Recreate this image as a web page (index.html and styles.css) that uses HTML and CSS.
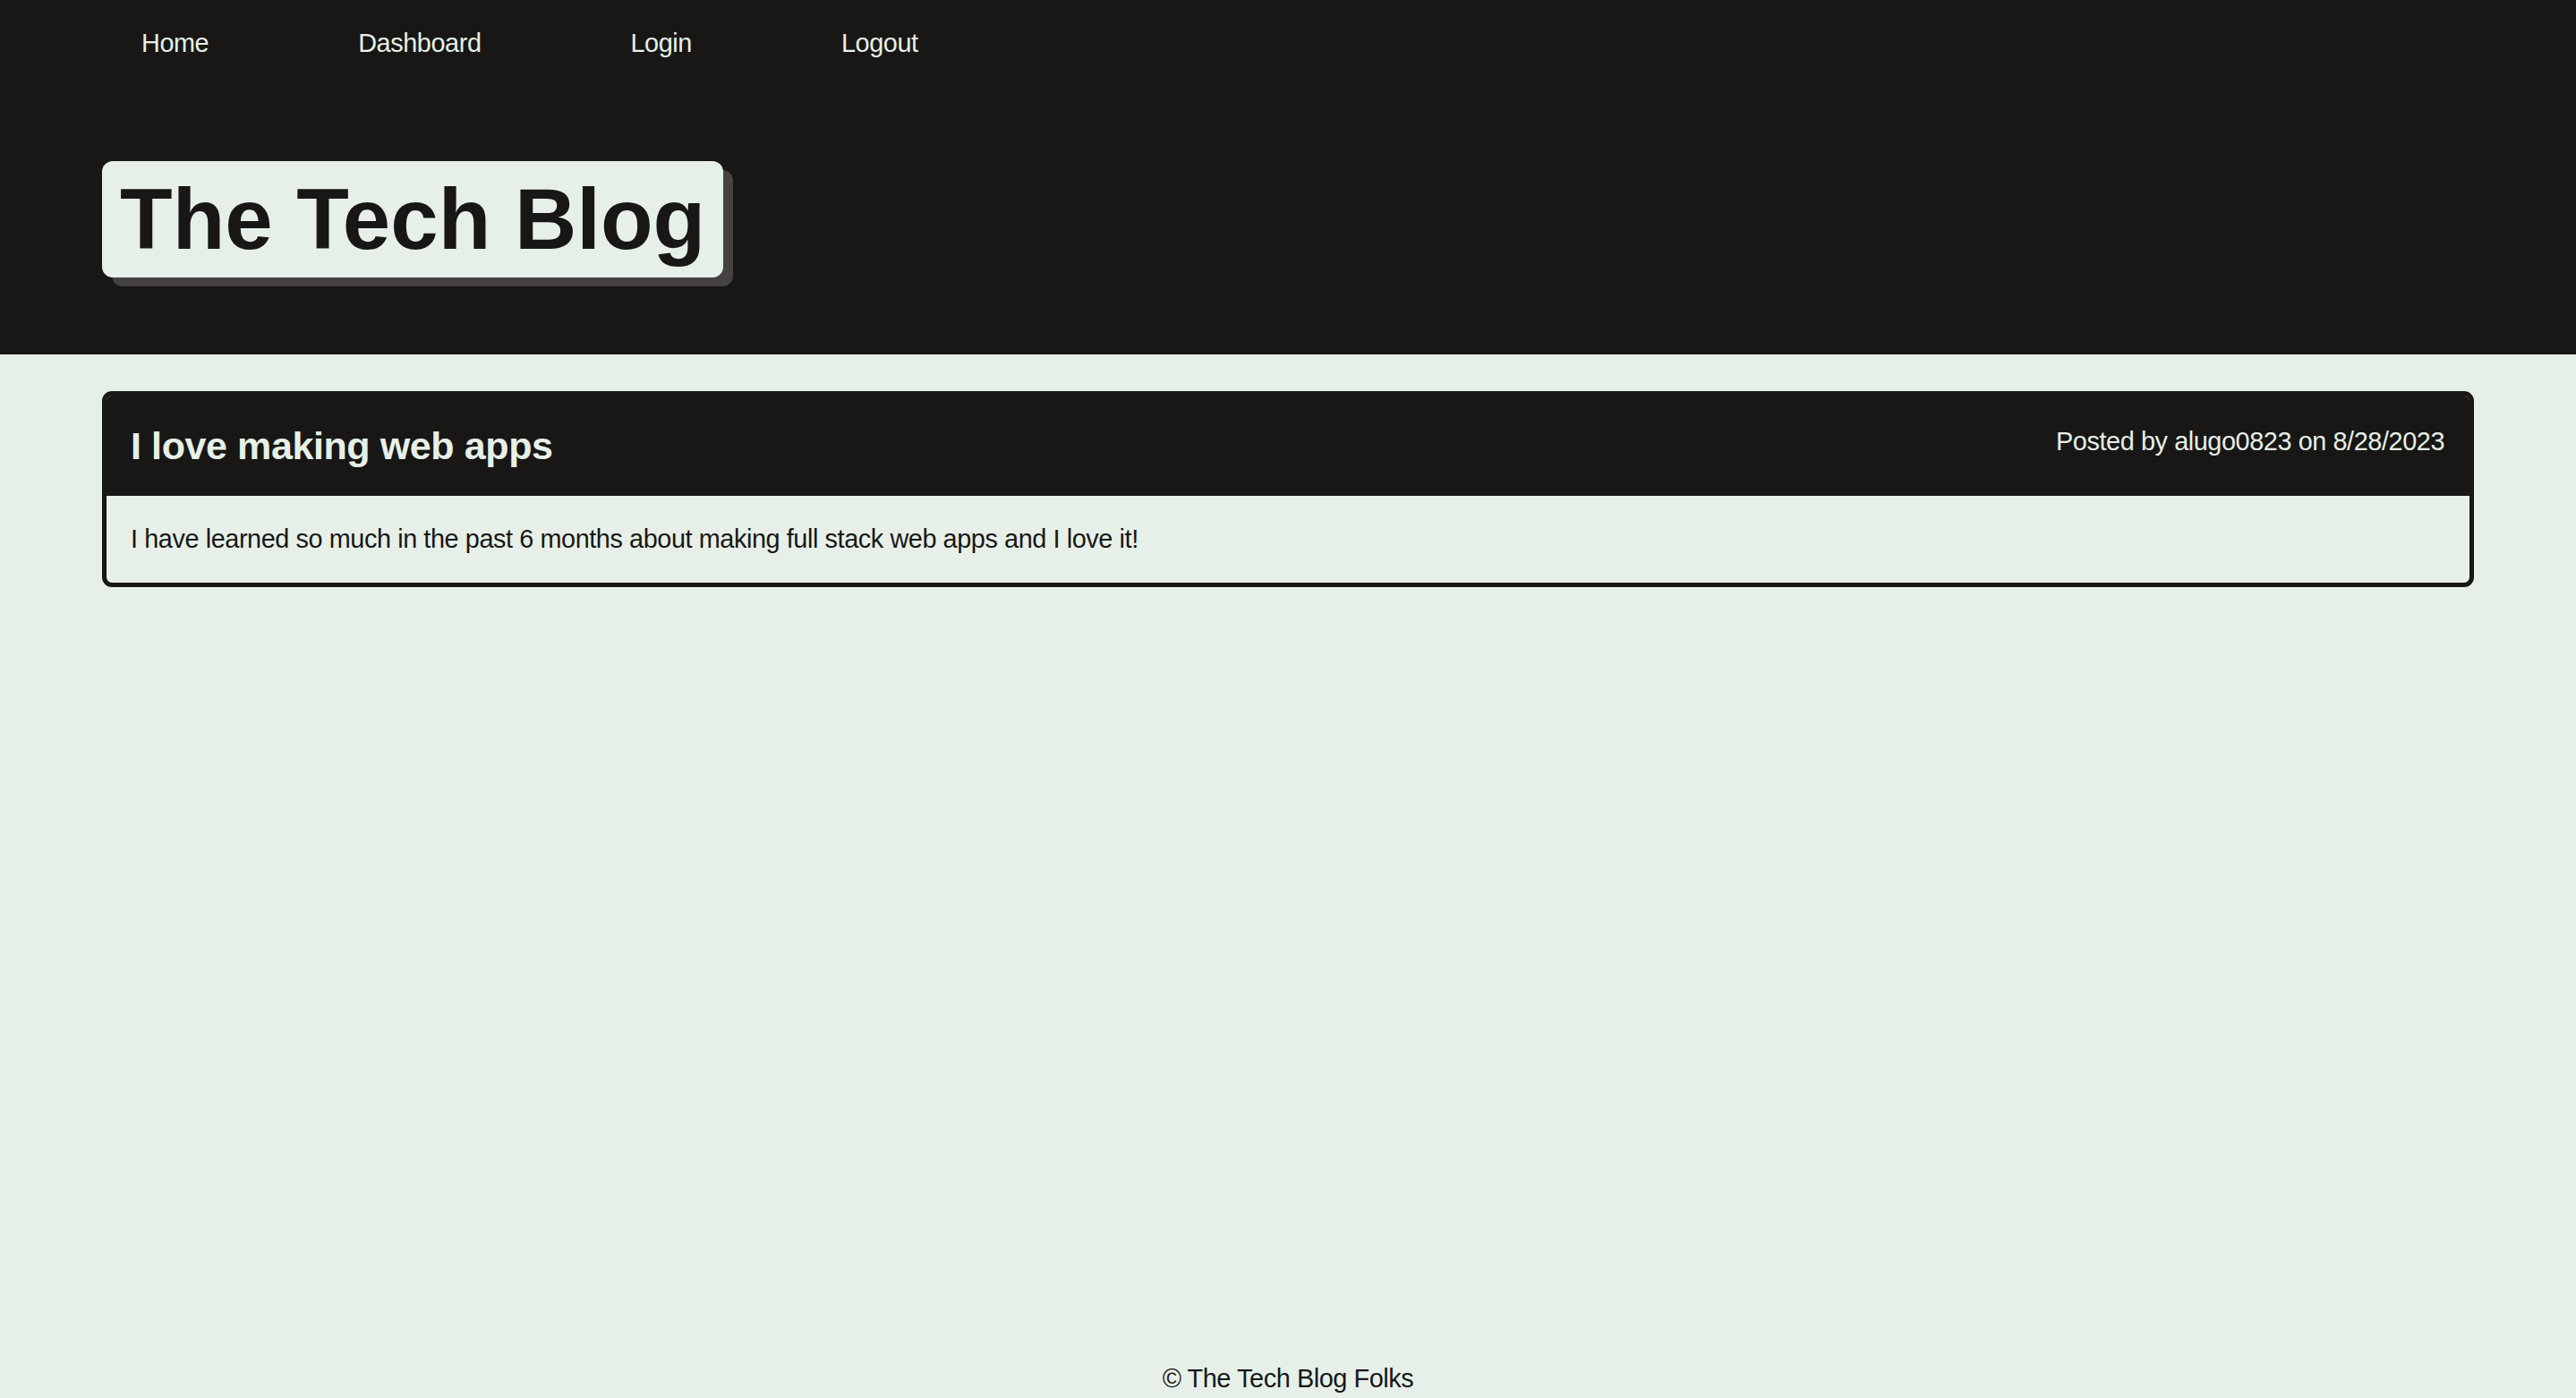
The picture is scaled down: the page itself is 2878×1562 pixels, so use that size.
FILE: index.html
```html
<!DOCTYPE html>
<html lang="en">
<head>
<meta charset="utf-8">
<title>The Tech Blog</title>
<link rel="stylesheet" href="styles.css">
</head>
<body>
<header class="site-header">
  <nav class="nav">
    <a class="nav-link" href="#">Home</a>
    <a class="nav-link" href="#">Dashboard</a>
    <a class="nav-link" href="#">Login</a>
    <a class="nav-link" href="#">Logout</a>
  </nav>
  <div class="brand-wrap">
    <h1 class="brand">The Tech Blog</h1>
  </div>
</header>
<main class="content">
  <article class="post">
    <div class="post-head">
      <h2 class="post-title">I love making web apps</h2>
      <p class="post-meta">Posted by alugo0823 on 8/28/2023</p>
    </div>
    <div class="post-body">
      <p class="post-text">I have learned so much in the past 6 months about making full stack web apps and I love it!</p>
    </div>
  </article>
</main>
<footer class="site-footer">© The Tech Blog Folks</footer>
</body>
</html>
```

FILE: styles.css
```css
* { box-sizing: border-box; }
html, body { margin: 0; padding: 0; }
body {
  font-family: "Liberation Sans", Arial, Helvetica, sans-serif;
  font-size: 28.8px;
  letter-spacing: -0.4px;
  background: #e6f0e8;
  color: #181715;
  min-height: 100vh;
  display: flex;
  flex-direction: column;
}
.site-header {
  background: #181715;
  padding: 0 114px 86px;
}
.nav {
  display: flex;
  gap: 167px;
  height: 96px;
  align-items: center;
  padding-left: 44px;
}
.nav-link {
  color: #e6f0e8;
  text-decoration: none;
  font-size: 28.8px;
}
.brand-wrap {
  margin-top: 84px;
  display: flex;
}
.brand {
  margin: 0;
  display: inline-block;
  font-size: 96px;
  font-weight: 700;
  letter-spacing: 0;
  line-height: 110px;
  padding: 10px 20px;
  background: #e6f0e8;
  color: #181715;
  border-radius: 12px;
  box-shadow: 11px 10px 0 #464242;
}
.content {
  flex: 1;
  padding: 41px 114px 0;
}
.post {
  border: 5.4px solid #181715;
  border-radius: 11px;
  overflow: hidden;
}
.post-head {
  background: #181715;
  color: #e6f0e8;
  display: flex;
  justify-content: space-between;
  align-items: flex-start;
  padding: 31px 28px 31px 27px;
}
.post-title {
  margin: 0;
  font-size: 43px;
  font-weight: 700;
  line-height: 50px;
}
.post-meta {
  margin: 4px 0 0;
  font-size: 28.8px;
  line-height: 33px;
}
.post-body {
  padding: 32px 28px 32px 27px;
}
.post-text {
  margin: 0;
  font-size: 28.8px;
  line-height: 33px;
}
.site-footer {
  text-align: center;
  font-size: 28.8px;
  line-height: 33px;
  padding-bottom: 5px;
}
```
